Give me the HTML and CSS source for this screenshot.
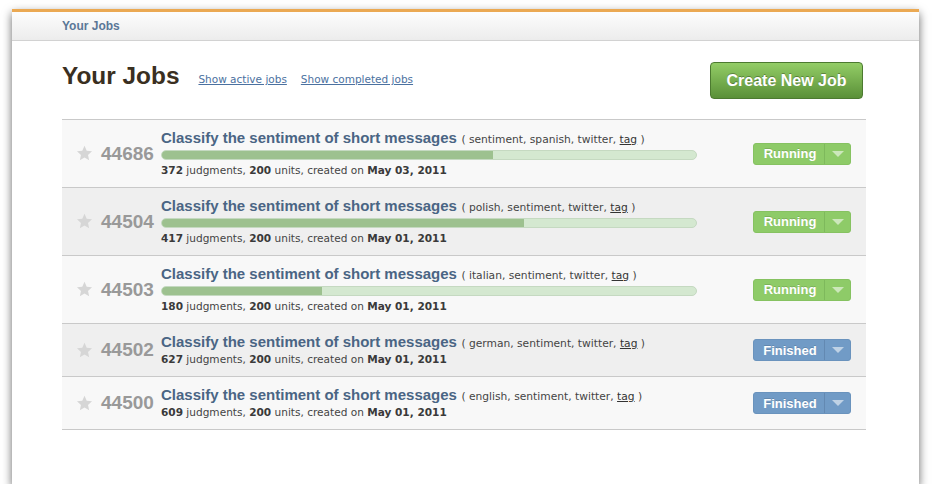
FILE: index.html
```html
<!DOCTYPE html>
<html>
<head>
<meta charset="utf-8">
<link rel="stylesheet" href="styles.css">
</head>
<body>
<div class="card">
  <div class="topbar"><span class="crumb">Your Jobs</span></div>
  <div class="content">
    <div class="head">
      <h1>Your Jobs</h1>
      <a class="filter" href="#">Show active jobs</a>
      <a class="filter" href="#">Show completed jobs</a>
      <span class="spacer"></span>
      <a class="create" href="#">Create New Job</a>
    </div>
    <div class="jobs">
      <div class="job odd">
        <svg class="star" viewBox="0 0 16 16"><path d="M8 0.8l2.1 4.6 5 .5-3.8 3.4 1.1 5-4.4-2.6-4.4 2.6 1.1-5L.9 5.9l5-.5z"/></svg>
        <span class="num">44686</span>
        <div class="body">
          <div class="title"><a href="#">Classify the sentiment of short messages</a> <span class="tags">( sentiment, spanish, twitter, <u>tag</u> )</span></div>
          <div class="bar"><div class="fill" style="width:62%"></div></div>
          <div class="meta"><b>372</b> judgments, <b>200</b> units, created on <b>May 03, 2011</b></div>
        </div>
        <div class="status running"><span class="lbl">Running</span><span class="dd"></span></div>
      </div>
      <div class="job even">
        <svg class="star" viewBox="0 0 16 16"><path d="M8 0.8l2.1 4.6 5 .5-3.8 3.4 1.1 5-4.4-2.6-4.4 2.6 1.1-5L.9 5.9l5-.5z"/></svg>
        <span class="num">44504</span>
        <div class="body">
          <div class="title"><a href="#">Classify the sentiment of short messages</a> <span class="tags">( polish, sentiment, twitter, <u>tag</u> )</span></div>
          <div class="bar"><div class="fill" style="width:67.7%"></div></div>
          <div class="meta"><b>417</b> judgments, <b>200</b> units, created on <b>May 01, 2011</b></div>
        </div>
        <div class="status running"><span class="lbl">Running</span><span class="dd"></span></div>
      </div>
      <div class="job odd">
        <svg class="star" viewBox="0 0 16 16"><path d="M8 0.8l2.1 4.6 5 .5-3.8 3.4 1.1 5-4.4-2.6-4.4 2.6 1.1-5L.9 5.9l5-.5z"/></svg>
        <span class="num">44503</span>
        <div class="body">
          <div class="title"><a href="#">Classify the sentiment of short messages</a> <span class="tags">( italian, sentiment, twitter, <u>tag</u> )</span></div>
          <div class="bar"><div class="fill" style="width:29.9%"></div></div>
          <div class="meta"><b>180</b> judgments, <b>200</b> units, created on <b>May 01, 2011</b></div>
        </div>
        <div class="status running"><span class="lbl">Running</span><span class="dd"></span></div>
      </div>
      <div class="job even">
        <svg class="star" viewBox="0 0 16 16"><path d="M8 0.8l2.1 4.6 5 .5-3.8 3.4 1.1 5-4.4-2.6-4.4 2.6 1.1-5L.9 5.9l5-.5z"/></svg>
        <span class="num">44502</span>
        <div class="body">
          <div class="title"><a href="#">Classify the sentiment of short messages</a> <span class="tags">( german, sentiment, twitter, <u>tag</u> )</span></div>
          <div class="meta"><b>627</b> judgments, <b>200</b> units, created on <b>May 01, 2011</b></div>
        </div>
        <div class="status finished"><span class="lbl">Finished</span><span class="dd"></span></div>
      </div>
      <div class="job odd">
        <svg class="star" viewBox="0 0 16 16"><path d="M8 0.8l2.1 4.6 5 .5-3.8 3.4 1.1 5-4.4-2.6-4.4 2.6 1.1-5L.9 5.9l5-.5z"/></svg>
        <span class="num">44500</span>
        <div class="body">
          <div class="title"><a href="#">Classify the sentiment of short messages</a> <span class="tags">( english, sentiment, twitter, <u>tag</u> )</span></div>
          <div class="meta"><b>609</b> judgments, <b>200</b> units, created on <b>May 01, 2011</b></div>
        </div>
        <div class="status finished"><span class="lbl">Finished</span><span class="dd"></span></div>
      </div>
    </div>
  </div>
</div>
</body>
</html>
```

FILE: styles.css
```css
html, body {
  margin: 0;
  padding: 0;
  background: #fff;
}
body {
  font-family: "Liberation Sans", Arial, sans-serif;
  padding: 9px 13px 0 12px;
}
.card {
  height: 475px;
  background: #fff;
  border-top: 3px solid #eba953;
  box-sizing: border-box;
  box-shadow: 0 4px 9px rgba(0,0,0,0.6);
}
.topbar {
  height: 29px;
  box-sizing: border-box;
  border-bottom: 1px solid #d2d2d2;
  background: linear-gradient(#fdfdfd, #ececec);
  padding-left: 50px;
  display: flex;
  align-items: center;
}
.crumb {
  font-size: 12px;
  font-weight: bold;
  color: #5b7797;
}
.content {
  padding: 20px 53px 0 50px;
}
.head {
  display: flex;
  align-items: center;
  height: 38px;
  margin-bottom: 20px;
}
h1 {
  margin: 0 19px 0 0;
  font-size: 24.4px;
  font-weight: bold;
  color: #3a2f21;
  position: relative;
  top: -4px;
}
.filter {
  font-family: "DejaVu Sans", sans-serif;
  font-size: 10.5px;
  color: #4b71a0;
  margin-right: 14px;
  position: relative;
  top: -1px;
}
.spacer { flex: 1; }
.create {
  width: 153px;
  height: 37px;
  box-sizing: border-box;
  margin-right: 3px;
  border: 1px solid #4c7a30;
  border-radius: 4px;
  background: linear-gradient(#93cd66, #5a9038);
  color: #fff;
  font-size: 16px;
  font-weight: bold;
  text-decoration: none;
  display: flex;
  align-items: center;
  justify-content: center;
  padding-top: 1px;
  text-shadow: 0 -1px 0 rgba(0,0,0,0.3);
}
.jobs {
  border-top: 1px solid #c9c9c9;
}
.job {
  display: flex;
  align-items: center;
  padding: 9px 15px 9px 14px;
  border-bottom: 1px solid #c9c9c9;
}
.job.odd { background: #f8f8f8; }
.job.even { background: #efefef; }
.star {
  width: 17px;
  height: 17px;
  fill: #d6d6d6;
  flex: none;
  margin-right: 8px;
}
.num {
  font-size: 19px;
  font-weight: bold;
  color: #999;
  width: 60px;
  flex: none;
}
.body {
  width: 536px;
  flex: none;
}
.title {
  height: 18px;
  line-height: 18px;
  white-space: nowrap;
}
.title a {
  font-size: 15px;
  font-weight: bold;
  color: #4a6584;
  text-decoration: none;
}
.tags {
  font-family: "DejaVu Sans", sans-serif;
  font-size: 10.7px;
  color: #444;
}
.tags u { color: #333; }
.bar {
  height: 10px;
  box-sizing: border-box;
  margin: 3px 0 2px;
  border-radius: 5px;
  background: #d4e8d0;
  border: 1px solid #c5d9c1;
  overflow: hidden;
}
.fill {
  height: 100%;
  background: #9dc18f;
}
.meta {
  font-family: "DejaVu Sans", sans-serif;
  font-size: 10.55px;
  color: #444;
  height: 16px;
  line-height: 16px;
}
.meta b { color: #3a3a3a; }
.status {
  margin-left: auto;
  width: 98px;
  height: 22px;
  box-sizing: border-box;
  border-radius: 3px;
  display: flex;
  align-items: stretch;
  color: #fff;
  font-size: 13px;
  font-weight: bold;
}
.status .lbl {
  width: 68px;
  display: flex;
  align-items: center;
  justify-content: center;
  padding-left: 2px;
  text-shadow: 0 -1px 0 rgba(0,0,0,0.15);
}
.status .dd {
  flex: 1;
  display: flex;
  align-items: center;
  justify-content: center;
}
.status .dd::after {
  content: "";
  border-left: 6px solid transparent;
  border-right: 6px solid transparent;
  border-top: 6px solid rgba(255,255,255,0.55);
}
.running {
  background: #8ecb68;
  border: 1px solid #86c261;
}
.running .dd { border-left: 1px solid #7eb95c; }
.finished {
  background: #719bc6;
  border: 1px solid #6a93bd;
}
.finished .dd { border-left: 1px solid #6389b2; }
```
